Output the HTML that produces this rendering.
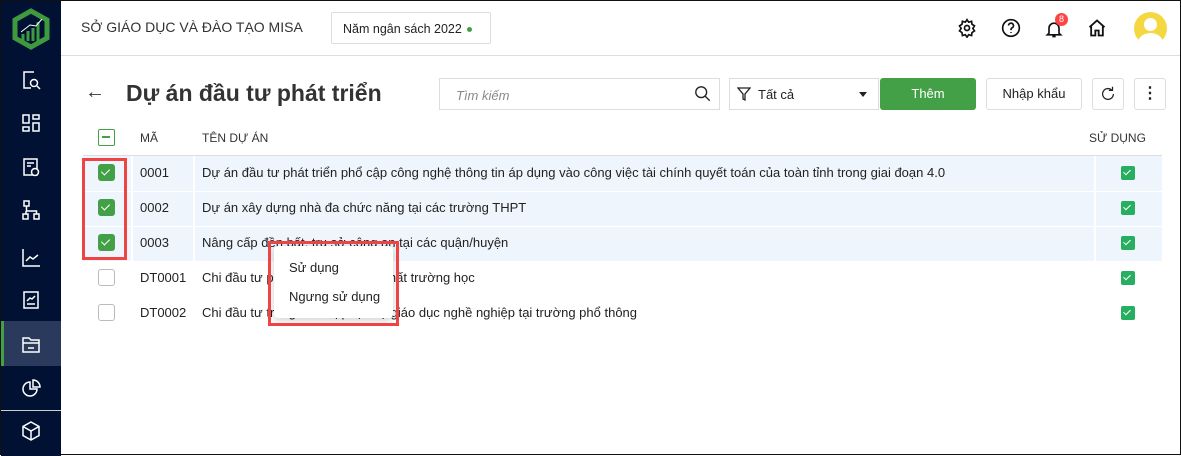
<!DOCTYPE html>
<html><head><meta charset="utf-8"><style>
*{box-sizing:border-box;margin:0;padding:0}
body{width:1181px;height:455px;overflow:hidden;font-family:"Liberation Sans",sans-serif;background:#fff;position:relative;border:1px solid #111;color:#222}
.abs{position:absolute}
.side{left:0;top:0;width:60px;height:455px;background:#001133}
.ic{position:absolute;left:19px;width:22px;height:22px}
.hdr{left:60px;top:0;right:0;height:55px;border-bottom:1px solid #ddd}
.t{font-size:13px;white-space:nowrap}
.row{position:absolute;left:82px;width:1079px;height:35px}
.sel{background:#eef5fd}
.cb{position:absolute;width:17px;height:17px;border-radius:3px}
.on{background:#43a047}
.on::after{content:"";position:absolute;left:5px;top:3px;width:4px;height:7px;border:solid #fff;border-width:0 1.5px 1.5px 0;transform:rotate(45deg)}
.off{border:1px solid #bbb;background:#fff}
.g2{background:#27ae60;width:14px;height:14px;border-radius:2px}
.g2::after{left:4px;top:2px;width:3px;height:6px}
.sep{position:absolute;top:0;width:2px;height:35px;background:#fff}
</style></head><body>
<div class="abs side">
<svg class="abs" style="left:9px;top:7px" width="42" height="42" viewBox="0 0 42 42"><polygon points="21,3 37,12 37,30 21,39 5,30 5,12" fill="none" stroke="#3f9a3f" stroke-width="5"/><path d="M13 33V26M18 33V23M23 33V20M28 33V14" stroke="#3f9a3f" stroke-width="3"/><path d="M11 24L20 17 26 18 32 11" stroke="#fff" stroke-width="1" fill="none"/></svg>
<svg class="ic" style="top:68px" viewBox="0 0 22 22" fill="none" stroke="#fff" stroke-width="1.5"><path d="M14 3H4v16h7"/><circle cx="14" cy="14" r="3.5"/><path d="M17 17l3 3"/></svg>
<svg class="ic" style="top:111px" viewBox="0 0 22 22" fill="none" stroke="#fff" stroke-width="1.5"><rect x="3" y="3" width="6" height="8"/><rect x="13" y="3" width="6" height="4"/><rect x="3" y="15" width="6" height="4"/><rect x="13" y="11" width="6" height="8"/></svg>
<svg class="ic" style="top:155px" viewBox="0 0 22 22" fill="none" stroke="#fff" stroke-width="1.5"><rect x="4" y="3" width="13" height="16"/><path d="M7 7h7M7 10h4"/><circle cx="15" cy="16" r="3.5" fill="#001133"/></svg>
<svg class="ic" style="top:198px" viewBox="0 0 22 22" fill="none" stroke="#fff" stroke-width="1.5"><rect x="4" y="2" width="5" height="5"/><rect x="3" y="15" width="5" height="5"/><rect x="14" y="15" width="5" height="5"/><path d="M6.5 7v5h10v3M6 12v3"/></svg>
<svg class="ic" style="top:245px" viewBox="0 0 22 22" fill="none" stroke="#fff" stroke-width="1.5"><path d="M3 3v17h17M6 15l4-4 3 2 5-4"/></svg>
<svg class="ic" style="top:288px" viewBox="0 0 22 22" fill="none" stroke="#fff" stroke-width="1.5"><rect x="4" y="3" width="14" height="16"/><path d="M7 12l3-3 2 1 3-3M7 15h8"/></svg>
<div class="abs" style="left:0;top:320px;width:60px;height:45px;background:#2a3a5c;border-left:3px solid #43a047"></div>
<svg class="ic" style="top:332px" viewBox="0 0 22 22" fill="none" stroke="#fff" stroke-width="1.5"><path d="M3 5h6l2 2h8v12H3z M3 10h16M8 15h6"/></svg>
<svg class="ic" style="top:376px" viewBox="0 0 22 22" fill="none" stroke="#fff" stroke-width="1.5"><path d="M10 5a7 7 0 1 0 7 7h-7z M13 3v7h7a7 7 0 0 0-7-7z"/></svg>
<div class="abs" style="left:0;top:409px;width:60px;height:1px;background:#ccc"></div>
<svg class="ic" style="top:419px" viewBox="0 0 22 22" fill="none" stroke="#fff" stroke-width="1.5"><path d="M11 2l8 4.5v9L11 20l-8-4.5v-9z M3 6.5l8 4.5 8-4.5M11 11v9"/></svg>
</div>
<div class="abs hdr">
<div class="abs" style="left:20px;top:18px;font-size:14px;color:#333">SỞ GIÁO DỤC VÀ ĐÀO TẠO MISA</div>
<div class="abs t" style="left:270px;top:11px;width:160px;height:32px;border:1px solid #ddd;border-radius:2px;padding:9px 0 0 11px;color:#222;font-size:12.5px">Năm ngân sách 2022 <span style="display:inline-block;width:5px;height:5px;border-radius:50%;background:#43a047;vertical-align:middle;margin-left:2px"></span></div>
<svg class="abs" style="left:896px;top:17px" width="20" height="20" viewBox="0 0 24 24" fill="none" stroke="#111" stroke-width="2"><circle cx="12" cy="12" r="3"/><path d="M12 2l2 3 3.5-1 .5 3.5 3 2-2 3 2 3-3 2-.5 3.5-3.5-1-2 3-2-3-3.5 1-.5-3.5-3-2 2-3-2-3 3-2 .5-3.5 3.5 1z"/></svg>
<svg class="abs" style="left:940px;top:17px" width="20" height="20" viewBox="0 0 24 24" fill="none" stroke="#111" stroke-width="2"><circle cx="12" cy="12" r="10"/><path d="M9 9a3 3 0 1 1 4 3c-1 .5-1 1-1 2.5M12 17v1"/></svg>
<svg class="abs" style="left:983px;top:17px" width="20" height="22" viewBox="0 0 24 24" fill="none" stroke="#111" stroke-width="2"><path d="M6 17V11a6 6 0 0 1 12 0v6l2 2H4z M10 21h4"/></svg>
<div class="abs" style="left:994px;top:12px;width:13px;height:13px;border-radius:50%;background:#f44;color:#fff;font-size:9px;text-align:center;line-height:13px">8</div>
<svg class="abs" style="left:1026px;top:17px" width="20" height="20" viewBox="0 0 24 24" fill="none" stroke="#111" stroke-width="2.2"><path d="M3 11l9-8 9 8M5 10v11h5v-6h4v6h5V10"/></svg>
<div class="abs" style="left:1073px;top:11px;width:33px;height:33px;border-radius:50%;background:#f5d742;overflow:hidden"><div class="abs" style="left:10px;top:6px;width:13px;height:13px;border-radius:50%;background:#fff"></div><div class="abs" style="left:4px;top:21px;width:25px;height:20px;border-radius:50%;background:#fff"></div></div>
</div>
<div class="abs" style="left:84px;top:80px;font-size:20px;color:#333">←</div>
<div class="abs" style="left:125px;top:79px;font-size:23px;color:#333;font-weight:bold;white-space:nowrap">Dự án đầu tư phát triển</div>
<div class="abs" style="left:438px;top:77px;width:281px;height:32px;border:1px solid #ddd"><span class="abs t" style="left:16px;top:9px;color:#888;font-style:italic">Tìm kiếm</span><svg class="abs" style="left:254px;top:6px" width="18" height="18" viewBox="0 0 20 20" fill="none" stroke="#222" stroke-width="1.5"><circle cx="8" cy="8" r="6"/><path d="M12.5 12.5l5 5"/></svg></div>
<div class="abs" style="left:728px;top:77px;width:150px;height:32px;border:1px solid #ddd"><svg class="abs" style="left:7px;top:8px" width="14" height="15" viewBox="0 0 14 15" fill="none" stroke="#222" stroke-width="1.3"><path d="M1 1h12L8 7v6l-2-1V7z"/></svg><span class="abs t" style="left:28px;top:8px">Tất cả</span><div class="abs" style="left:129px;top:13px;border:4px solid transparent;border-top:5px solid #222"></div></div>
<div class="abs t" style="left:879px;top:77px;width:96px;height:32px;background:#43a047;border-radius:3px;color:#fff;text-align:center;line-height:32px">Thêm</div>
<div class="abs t" style="left:985px;top:77px;width:96px;height:32px;border:1px solid #ddd;border-radius:3px;text-align:center;line-height:30px">Nhập khẩu</div>
<div class="abs" style="left:1091px;top:77px;width:32px;height:32px;border:1px solid #ddd;border-radius:3px"><svg class="abs" style="left:6px;top:6px" width="18" height="18" viewBox="0 0 20 20" fill="none" stroke="#222" stroke-width="1.4"><path d="M16 10a6 6 0 1 1-2-4.5M15 2v4h-4"/></svg></div>
<div class="abs" style="left:1133px;top:77px;width:32px;height:32px;border:1px solid #ddd;border-radius:3px;text-align:center;font-size:16px;line-height:30px;font-weight:bold">⋮</div>

<div class="abs" style="left:97px;top:128px;width:17px;height:17px;border:1.5px solid #43a047;border-radius:2px"><div class="abs" style="left:3px;top:6px;width:8px;height:2px;background:#43a047"></div></div>
<div class="abs t" style="left:139px;top:130px;font-size:12px;color:#333">MÃ</div>
<div class="abs t" style="left:201px;top:130px;font-size:12px;color:#333">TÊN DỰ ÁN</div>
<div class="abs t" style="left:1088px;top:130px;font-size:12px;color:#333">SỬ DỤNG</div>
<div class="abs" style="left:82px;top:154px;width:1079px;height:1px;background:#ddd"></div>

<div class="row sel" style="top:155px"><div class="sep" style="left:48px"></div><div class="sep" style="left:110px"></div><div class="sep" style="left:1011px"></div></div>
<div class="row sel" style="top:190px;border-top:1px solid #fff"><div class="sep" style="left:48px"></div><div class="sep" style="left:110px"></div><div class="sep" style="left:1011px"></div></div>
<div class="row sel" style="top:225px;border-top:1px solid #fff"><div class="sep" style="left:48px"></div><div class="sep" style="left:110px"></div><div class="sep" style="left:1011px"></div></div>

<div class="cb on" style="left:97px;top:163px"></div>
<div class="cb on" style="left:97px;top:198px"></div>
<div class="cb on" style="left:97px;top:233px"></div>
<div class="cb off" style="left:97px;top:268px"></div>
<div class="cb off" style="left:97px;top:303px"></div>
<div class="abs t" style="left:139px;top:164px">0001</div>
<div class="abs t" style="left:139px;top:199px">0002</div>
<div class="abs t" style="left:139px;top:234px">0003</div>
<div class="abs t" style="left:139px;top:269px">DT0001</div>
<div class="abs t" style="left:139px;top:304px">DT0002</div>
<div class="abs t" style="left:201px;top:164px">Dự án đầu tư phát triển phổ cập công nghệ thông tin áp dụng vào công việc tài chính quyết toán của toàn tỉnh trong giai đoạn 4.0</div>
<div class="abs t" style="left:201px;top:199px">Dự án xây dựng nhà đa chức năng tại các trường THPT</div>
<div class="abs t" style="left:201px;top:234px">Nâng cấp đền bất, trụ sở công an tại các quận/huyện</div>
<div class="abs t" style="left:201px;top:269px">Chi đầu tư phát triển cơ sở vật chất trường học</div>
<div class="abs t" style="left:201px;top:304px">Chi đầu tư trang thiết bị phục vụ giáo dục nghề nghiệp tại trường phổ thông</div>
<div class="cb on g2" style="left:1120px;top:165px"></div>
<div class="cb on g2" style="left:1120px;top:200px"></div>
<div class="cb on g2" style="left:1120px;top:235px"></div>
<div class="cb on g2" style="left:1120px;top:270px"></div>
<div class="cb on g2" style="left:1120px;top:305px"></div>

<div class="abs" style="left:81px;top:157px;width:45px;height:102px;border:3px solid #f04343"></div>
<div class="abs" style="left:273px;top:245px;width:119px;height:72px;background:#fff;border-radius:4px;box-shadow:0 2px 8px rgba(0,0,0,.2)"></div>
<div class="abs" style="left:267px;top:240px;width:131px;height:85px;border:3px solid #f04343"></div>
<div class="abs t" style="left:288px;top:259px">Sử dụng</div>
<div class="abs t" style="left:288px;top:288px">Ngưng sử dụng</div>
</body></html>
